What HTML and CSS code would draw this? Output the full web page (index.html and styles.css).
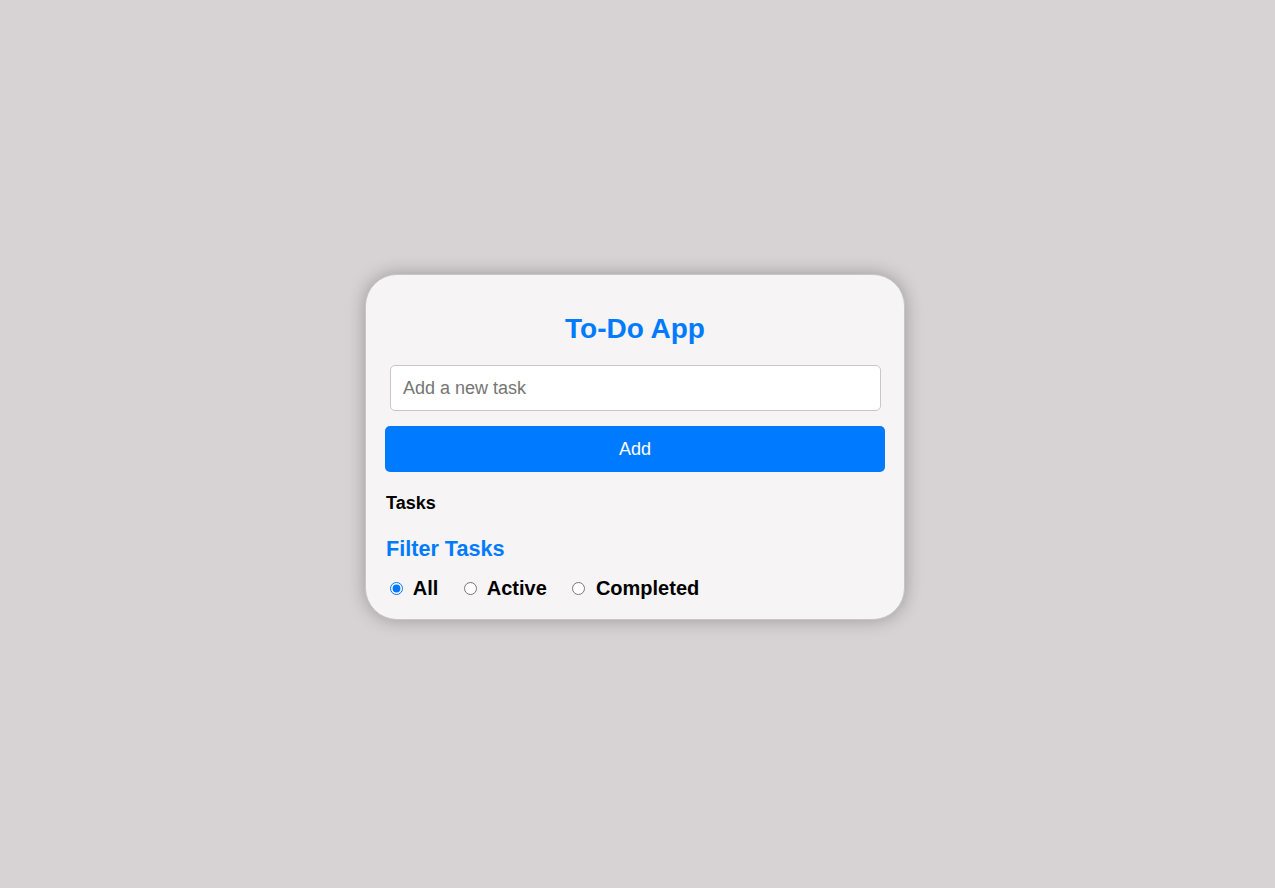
FILE: index.html
```html
<!DOCTYPE html>
<html lang="en">
<head>
<meta charset="UTF-8">
<title>To-Do App</title>
<link rel="stylesheet" href="styles.css">
</head>
<body>
  <div class="app">
    <h1 class="title">To-Do App</h1>
    <input class="task-input" type="text" placeholder="Add a new task">
    <button class="add-btn" type="button">Add</button>
    <h3 class="tasks-heading">Tasks</h3>
    <ul class="task-list"></ul>
    <h3 class="filter-heading">Filter Tasks</h3>
    <div class="filters">
      <label class="filter"><input type="radio" name="filter" value="all" checked> All</label>
      <label class="filter"><input type="radio" name="filter" value="active"> Active</label>
      <label class="filter"><input type="radio" name="filter" value="completed"> Completed</label>
    </div>
  </div>
</body>
</html>
```

FILE: styles.css
```css
* {
  box-sizing: border-box;
}

html, body {
  margin: 0;
}

body {
  min-height: 100vh;
  padding: 6px 5px 0 0;
  background: #d7d2d3;
  font-family: "Liberation Sans", Arial, sans-serif;
  display: flex;
  align-items: center;
  justify-content: center;
}

.app {
  width: 540px;
  padding: 19px 19px 19px;
  background: #f6f4f5;
  border: 1px solid #c9c5c6;
  border-radius: 32px;
  box-shadow: 0 0 18px rgba(0, 0, 0, 0.28);
}

.title {
  margin: 19px 0 0;
  font-size: 28px;
  line-height: 31px;
  font-weight: bold;
  color: #007bff;
  text-align: center;
}

.task-input {
  display: block;
  width: 491px;
  height: 46px;
  margin: 21px 0 0 5px;
  padding: 0 12px;
  font-family: "Liberation Sans", Arial, sans-serif;
  font-size: 18px;
  border: 1px solid #c8c8c8;
  border-radius: 5px;
  background: #ffffff;
  outline: none;
}

.task-input::placeholder {
  color: #757575;
}

.add-btn {
  display: block;
  width: 100%;
  height: 46px;
  margin-top: 15px;
  border: none;
  border-radius: 5px;
  background: #007bff;
  color: #ffffff;
  font-family: "Liberation Sans", Arial, sans-serif;
  font-size: 18px;
  cursor: pointer;
}

.tasks-heading {
  margin: 21px 0 0 1px;
  font-size: 18px;
  line-height: 21px;
  font-weight: bold;
  color: #000000;
}

.task-list {
  list-style: none;
  margin: 0;
  padding: 0;
}

.filter-heading {
  margin: 23px 0 0 1px;
  font-size: 21.6px;
  line-height: 24px;
  font-weight: bold;
  color: #007bff;
}

.filters {
  margin-top: 16px;
  font-size: 20px;
  line-height: 23px;
  font-weight: bold;
  color: #000000;
}

.filter {
  margin-right: 15px;
}

.filter input {
  margin: 3px 5px 0 5px;
}
```
